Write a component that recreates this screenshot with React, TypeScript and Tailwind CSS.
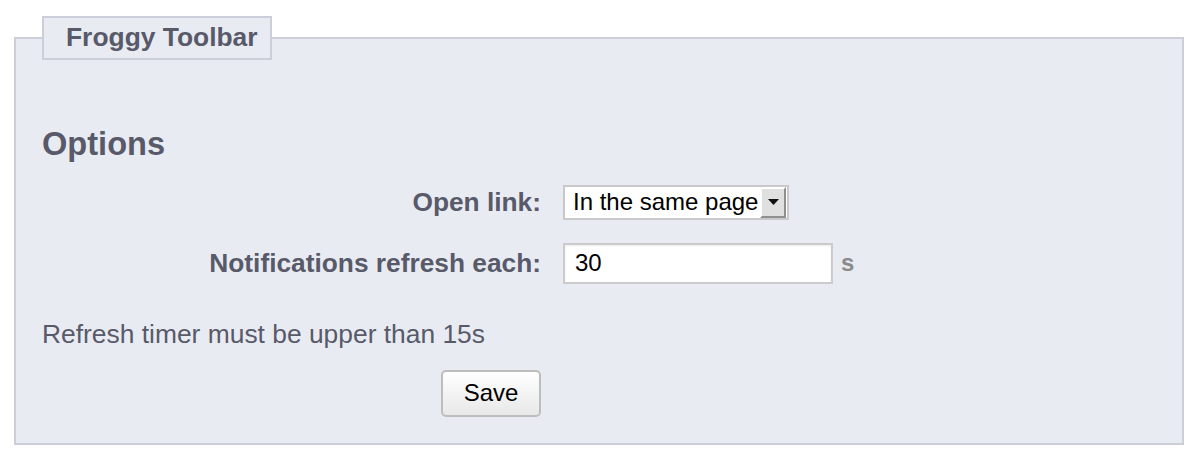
import React from 'react';

const labelCls = 'w-[499px] shrink-0 text-right text-[26.3px] font-bold leading-none text-[#585a69]';

export default function App() {
  return (
    <div className="min-h-[459px] bg-white pt-4 font-['Liberation_Sans',Arial,sans-serif]">
      <fieldset className="ml-[14px] w-[1170px] border-2 border-[#cccfd9] bg-[#e9ebf3] px-[26px] pb-[26px]">
        <legend className="flex h-[44px] w-[230px] items-center border-2 border-[#cccfd9] bg-[#e9ebf3] pl-[22px] text-[26.4px] font-bold text-[#585a69]">
          Froggy Toolbar
        </legend>

        {/* Options */}
        <h2 className="mt-[68px] text-[32.6px] font-bold leading-none text-[#585a69]">Options</h2>

        <div className="mt-[24px] flex items-center">
          <label className={labelCls}>Open link:</label>
          <div className="ml-[22px] flex h-[35px] w-[226px] items-center border-2 border-[#c9c9c9] bg-white pl-[8px]">
            <span className="flex-1 text-[24px] leading-none text-black">In the same page</span>
            <div className="mr-[1px] flex h-[31px] w-[26px] items-center justify-center border-2 border-t-white border-l-white border-r-[#8f8f8f] border-b-[#8f8f8f] bg-[#e0e0e0]">
              <svg width="11" height="6" viewBox="0 0 11 6">
                <path d="M0 0h11L5.5 6z" fill="#111" />
              </svg>
            </div>
          </div>
        </div>

        <div className="mt-[23px] flex items-center">
          <label className={labelCls}>Notifications refresh each:</label>
          <input
            type="text"
            defaultValue="30"
            className="ml-[22px] h-[41px] w-[270px] border-2 border-[#cbcbcb] bg-white px-[10px] text-[24px] text-black shadow-[inset_0_1px_2px_rgba(0,0,0,0.08)] outline-none"
          />
          <span className="ml-[8px] text-[24px] font-bold text-[#8a8a8a]">s</span>
        </div>

        <p className="mt-[35px] text-[26.4px] leading-[30px] text-[#585a69]">Refresh timer must be upper than 15s</p>

        <div className="mt-[21px] pl-[399px]">
          <button className="h-[47px] w-[100px] rounded-[5px] border-2 border-[#bdbdbd] bg-gradient-to-b from-white to-[#e8e8e8] text-[24px] text-black">
            Save
          </button>
        </div>
      </fieldset>
    </div>
  );
}
